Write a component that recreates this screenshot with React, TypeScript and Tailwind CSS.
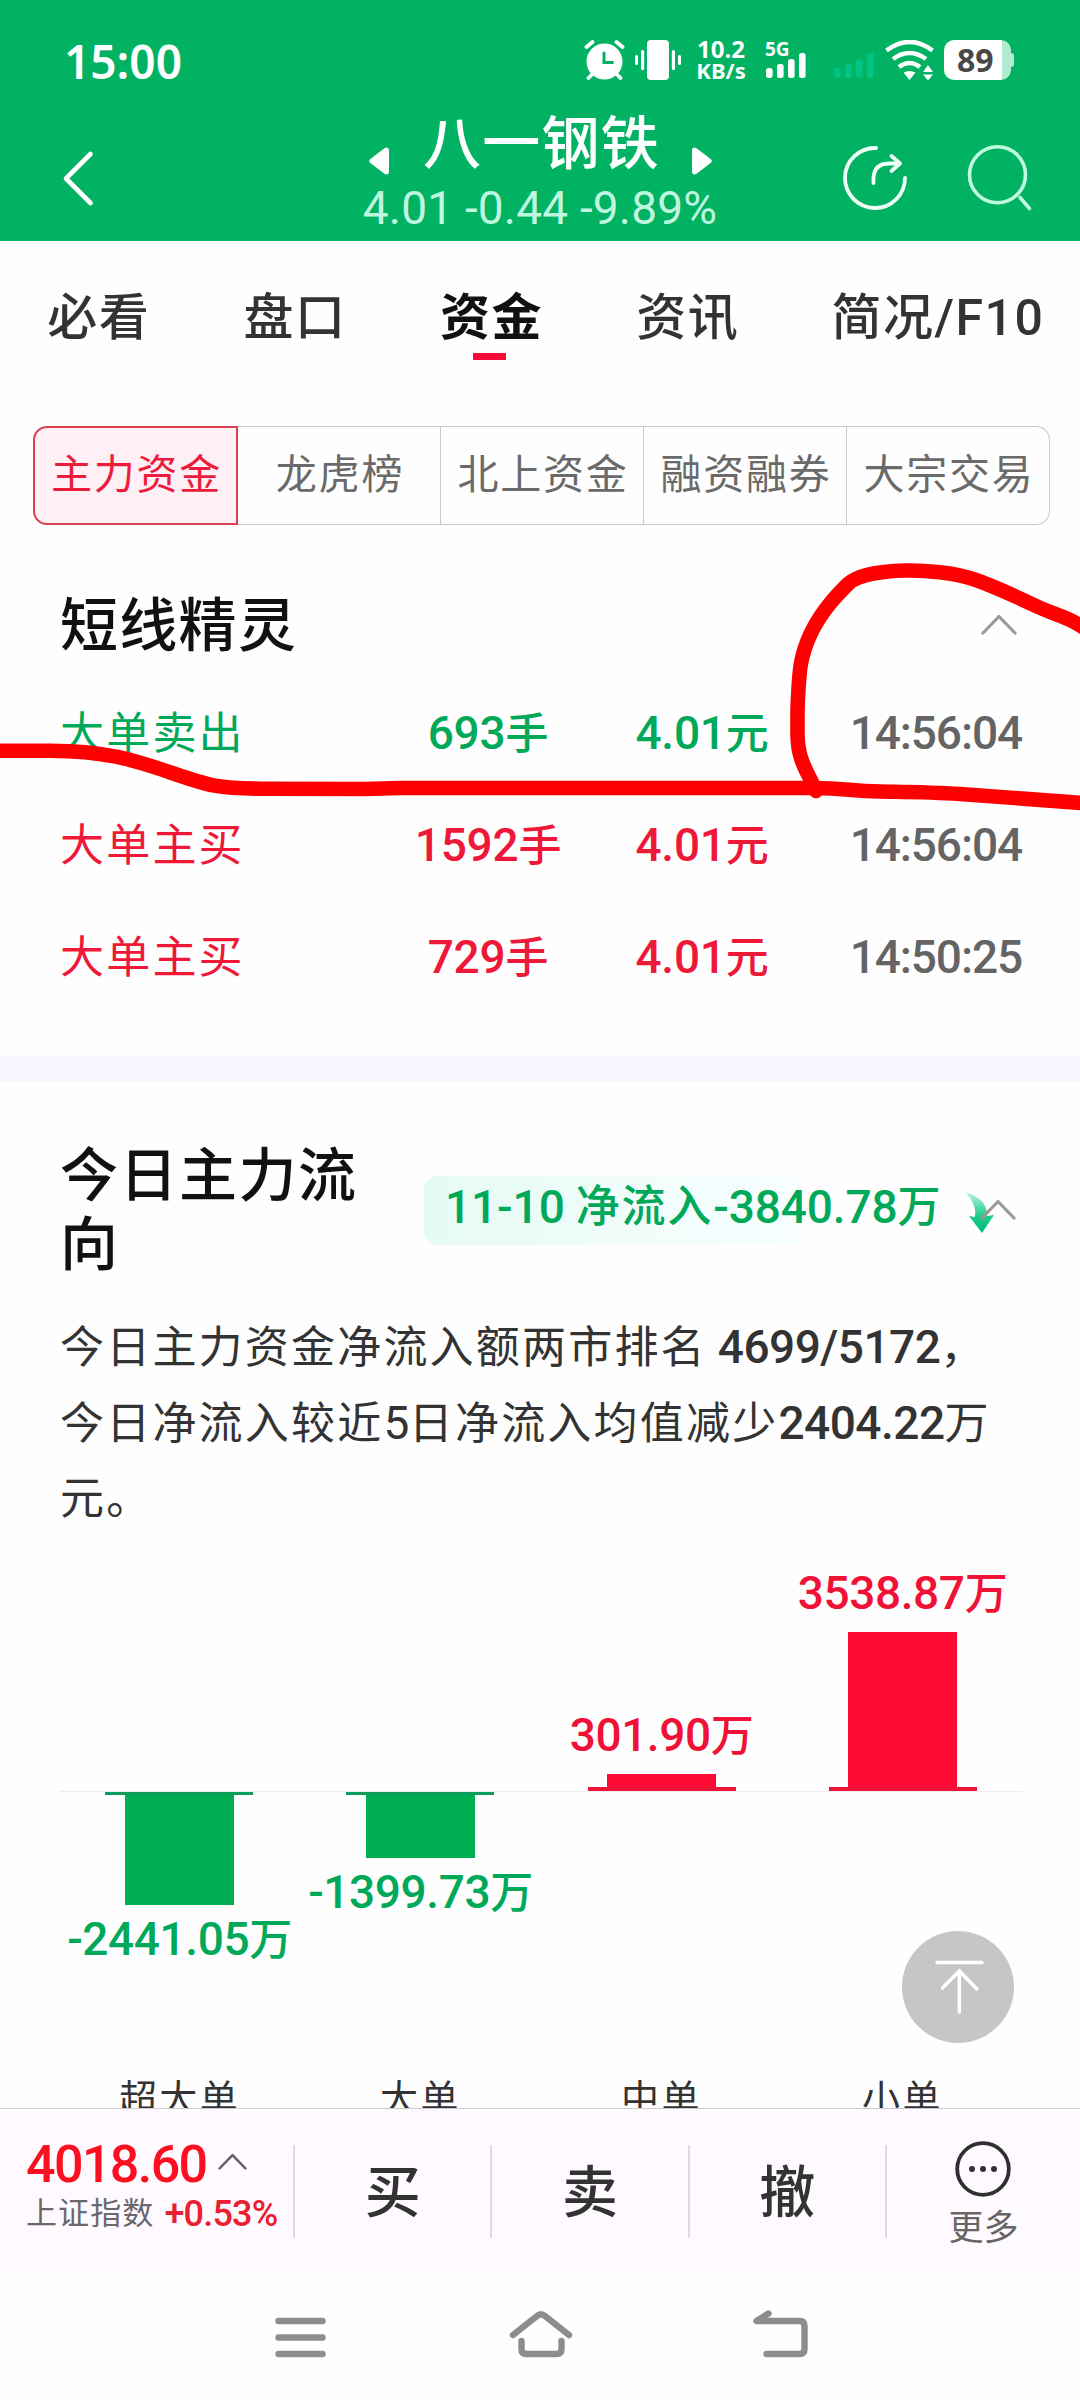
import type { ReactNode } from "react";

const tabs = ["必看", "盘口", "资金", "资讯"];

const segments = ["主力资金", "龙虎榜", "北上资金", "融资融券", "大宗交易"];

const orders = [
  { type: "大单卖出", side: "sell", lots: "693", price: "4.01", time: "14:56:04" },
  { type: "大单主买", side: "buy", lots: "1592", price: "4.01", time: "14:56:04" },
  { type: "大单主买", side: "buy", lots: "729", price: "4.01", time: "14:50:25" },
];

const flows = [
  { name: "超大单", value: "-2441.05", height: 110 },
  { name: "大单", value: "-1399.73", height: 63 },
  { name: "中单", value: "301.90", height: 13 },
  { name: "小单", value: "3538.87", height: 155 },
];

export default function App() {
  return (
    <div className="relative flex h-[2400px] w-[1080px] flex-col overflow-hidden bg-[#fefefe] font-['Roboto','Noto_Sans_CJK_SC',sans-serif] text-[#333]">
      <Header />
      <Tabs />
      <Segments />
      <ShortTerm />
      <div className="h-[26px] shrink-0 bg-[#f6f7ff]" />
      <FlowSection />
      <TradeBar />
      <NavBar />
      <Marker />
    </div>
  );
}

function Header() {
  return (
    <header className="flex h-[241px] shrink-0 flex-col bg-[#00b262] text-white">
      <div className="flex h-20 items-center pt-10 pl-[64px]">
        <span className="w-[520px] pt-0.5 font-['Noto_Sans'] text-[46px] leading-[40px] font-semibold">15:00</span>
        <AlarmIcon />
        <VibrateIcon />
        <div className="ml-[15px] w-[50px] text-center font-['Noto_Sans'] font-bold">
          <p className="text-[24px] leading-[21px]">10.2</p>
          <p className="text-[22px] leading-[23px]">KB/s</p>
        </div>
        <div className="ml-[19px] flex h-10 flex-col">
          <span className="-mt-0.5 h-4 font-['Noto_Sans'] text-[19px] leading-[22px] font-bold">5G</span>
          <Signal className="-mt-px fill-white" />
        </div>
        <Signal className="mt-3 ml-[26px] fill-[#00c486]" />
        <WifiIcon />
        <div className="ml-[9px] flex items-center">
          <div className="flex h-10 w-[67px] items-center rounded-[10px] bg-[linear-gradient(90deg,#fff_58px,#b0ead0_58px)] pl-[13px]">
            <span className="font-['Noto_Sans'] text-[32px] leading-[40px] font-bold text-[#484848]">89</span>
          </div>
          <div className="h-3.5 w-[3px] rounded-r-sm bg-[#b0ead0]" />
        </div>
      </div>

      <div className="grid flex-1 grid-cols-[340px_400px_340px]">
        <div className="pt-[69px] pl-[61px]">
          <svg width="34" height="60" viewBox="0 0 34 60" fill="none" stroke="#fff" strokeWidth="4.600" strokeLinecap="round" strokeLinejoin="round">
            <path d="M29.500 5 5 29.500 29.500 54" />
          </svg>
        </div>
        <div className="flex flex-col items-center pt-[34px]">
          <div className="flex h-[60px] items-center">
            <svg className="mt-[33px]" width="20" height="28" viewBox="0 0 20 28" fill="#fff">
              <path d="M1.400 12 15.800.9Q19.600-.6 20 3v22q-.4 3.600-4.200 2.100L1.400 16q-2.400-2 0-4Z" />
            </svg>
            <h1 className="w-[303px] pl-[3px] text-center text-[58px] leading-[60px] font-medium tracking-[1.200px]">八一钢铁</h1>
            <svg className="mt-[33px]" width="20" height="28" viewBox="0 0 20 28" fill="#fff">
              <path d="M18.600 12 4.200.9Q.4-.6 0 3v22q.4 3.600 4.200 2.100L18.600 16q2.400-2 0-4Z" />
            </svg>
          </div>
          <p className="mt-[16px] text-[46px] leading-[36px] tracking-[0.200px] whitespace-nowrap text-[#bff6df]">4.01 -0.44 -9.89%</p>
        </div>
        <div className="flex gap-[57px] pt-[62px] pl-[101px]">
          <svg width="68" height="70" viewBox="0 0 68 70" fill="none" stroke="#effff7" strokeWidth="3.800" strokeLinecap="round" strokeLinejoin="round">
            <path d="M35 6A30 30 0 1 0 64 36" />
            <path d="M32.500 41v-4q0-15.500 16-15.500h10" />
            <path d="m50.500 14 8.500 7.500-8.500 7.500" />
          </svg>
          <svg width="68" height="70" viewBox="0 0 68 70" fill="none" stroke="#bffbe0" strokeWidth="3.600" strokeLinecap="round">
            <circle cx="31.500" cy="32.700" r="28" />
            <path d="m54 55.500 9.500 11" />
          </svg>
        </div>
      </div>
    </header>
  );
}

function Tabs() {
  return (
    <nav className="flex h-[185px] shrink-0 pt-[47px] text-[50px] leading-[60px] font-medium tracking-[1.500px]">
      {tabs.map((tab) => (
        <div key={tab} className="flex w-[196.400px] flex-col items-center pl-[1px]">
          <span className={tab === "资金" ? "font-bold text-[#111]" : ""}>{tab}</span>
          {tab === "资金" && <span className="mt-[5px] mr-[3px] h-[7px] w-[33px] bg-[#fb0a35]" />}
        </div>
      ))}
      <span className="pl-[46px] whitespace-nowrap">简况/F10</span>
    </nav>
  );
}

function Segments() {
  return (
    <div className="mx-[33px] flex h-[99px] w-[1017px] shrink-0 text-[41px] tracking-[1.800px] text-[#6a6a6a]">
      {segments.map((item, i) => (
        <div
          key={item}
          className={`flex items-center justify-center pl-0.5 ${
            i === 0
              ? "w-[205px] rounded-l-[14px] border-2 border-[#dd4054] bg-[#fff0f5] text-[#ec1c3c]"
              : i === segments.length - 1
                ? "w-[203px] rounded-r-[14px] border-y border-r border-[#c9c9c9]"
                : "w-[203px] border-y border-r border-[#c9c9c9]"
          }`}
        >
          {item}
        </div>
      ))}
    </div>
  );
}

function ShortTerm() {
  return (
    <section className="h-[531px] shrink-0 pt-[71px] pl-[60px]">
      <div className="flex h-[60px] items-center">
        <h2 className="w-[921px] text-[58px] leading-[60px] font-medium tracking-[1.300px] text-[#111]">短线精灵</h2>
        <ChevronUp className="-mt-1 h-[23px] w-9 stroke-[#999]" />
      </div>
      <div className="mt-[21px]">
        {orders.map((order) => (
          <div
            key={order.type + order.time}
            className={`flex h-[112px] items-center text-[46px] font-medium tracking-[-0.200px] ${
              order.side === "sell" ? "text-[#00a859]" : "text-[#ee1838]"
            }`}
          >
            <span className="w-[321px] pt-px text-[44px] font-normal tracking-[2.200px]">{order.type}</span>
            <span className="w-[214px] text-center">
              {order.lots}
              <Unit>手</Unit>
            </span>
            <span className="w-[214px] text-center">
              {order.price}
              <Unit>元</Unit>
            </span>
            <span className="w-[213px] text-right tracking-[-1.100px] text-[#646464]">{order.time}</span>
          </div>
        ))}
      </div>
    </section>
  );
}

function FlowSection() {
  return (
    <section className="relative h-[1026px] shrink-0 overflow-hidden pt-[60px]">
      <div className="flex pl-[60px]">
        <h2 className="w-[364px] pr-[50px] text-[58px] leading-[69px] font-medium tracking-[1.500px] text-[#111]">今日主力流向</h2>
        <div className="mt-[34px] flex h-[69px] w-[540px] rounded-l-[14px] bg-[linear-gradient(90deg,#e4fbf2,#f0fcfa_50%,#f7feff)] bg-[length:374px_100%] bg-no-repeat pl-[21px] text-[46px] leading-[63px] font-medium tracking-[-0.100px] whitespace-nowrap text-[#00a859]">
          11-10 <span className="ml-[11px] text-[44px] tracking-[1.800px]">净流入</span>-3840.78<Unit>万</Unit>
        </div>
        <div className="relative mt-[49px]">
          <svg width="32" height="44" viewBox="0 0 32 44">
            <defs>
              <linearGradient id="drop" x1="0" y1="0" x2="0" y2="1">
                <stop offset="0" stopColor="#b9f5dd" />
                <stop offset="0.600" stopColor="#20ca8b" />
                <stop offset="1" stopColor="#00bc78" />
              </linearGradient>
            </defs>
            <path d="M1 1Q24 8 23 25l7-1-12 18L5 25l6 1Q13 13 1 1Z" fill="url(#drop)" />
          </svg>
          <ChevronUp className="absolute top-[7px] left-[16px] h-[23px] w-9 stroke-[#999]" />
        </div>
      </div>

      <p className="mt-[30px] pl-[60px] text-[44px] leading-[75px] tracking-[2.200px] whitespace-nowrap">
        今日主力资金净流入额两市排名
        <Num>&nbsp;4699/5172</Num>，<br />
        今日净流入较近<span className="text-[46px] tracking-[-0.500px]">5</span>日净流入均值减少<Num>2404.22</Num>万<br />
        元。
      </p>

      <div className="-mt-0.5 ml-[59px] grid w-[964px] grid-cols-4">
        {flows.map((flow) => (
          <FlowColumn key={flow.name} {...flow} />
        ))}
      </div>

      <button className="absolute top-[849px] left-[902px] h-[112px] w-[112px] rounded-full bg-[#c6c6c6]">
        <svg width="112" height="112" viewBox="0 0 112 112" fill="none" stroke="#fff" strokeWidth="3.400" strokeLinecap="round" strokeLinejoin="round">
          <path d="M35 31.500h45M57.300 81V39.500M40.500 57l16.800-17L75 58" />
        </svg>
      </button>
    </section>
  );
}

function FlowColumn({ name, value, height }: { name: string; value: string; height: number }) {
  const out = value.startsWith("-");
  const label = (
    <span className="text-[46px] leading-[46px] font-medium tracking-[-0.400px] whitespace-nowrap">
      {value}
      <Unit>万</Unit>
    </span>
  );
  return (
    <div className="flex flex-col items-center">
      <div className="flex h-[257px] w-full flex-col items-center justify-end border-b border-[#ededed] text-[#f01236]">
        {!out && (
          <>
            {label}
            <div className="mt-[15px] w-[109px] bg-[#ff0b35]" style={{ height }} />
            <div className="h-1 w-[148px] bg-[#ee1439]" />
          </>
        )}
      </div>
      <div className="flex h-[282px] flex-col items-center text-[#00a859]">
        {out && (
          <>
            <div className="h-[3px] w-[148px] bg-[#0c9c5c]" />
            <div className="mb-[11px] w-[109px] bg-[#00ad50]" style={{ height }} />
            {label}
          </>
        )}
      </div>
      <span className="text-[38px] leading-[50px] tracking-[2.400px]">{name}</span>
    </div>
  );
}

function TradeBar() {
  return (
    <div className="flex h-[166px] shrink-0 border-t border-[#cdcbcf] bg-[#fffaff] pt-[36px]">
      <div className="h-[93px] w-[295px] border-r-2 border-[#dddbe0] pl-[26px] whitespace-nowrap">
        <div className="-mt-[3px] flex h-[46px] items-center text-[#fb0f20]">
          <span className="w-[192px] text-[52px] leading-[46px] font-medium tracking-[-1.600px]">4018.60</span>
          <ChevronUp className="-mt-2 h-[19px] w-[29px] stroke-[#666]" />
        </div>
        <div className="mt-2 flex h-9 items-center text-[31px] tracking-[1.100px] text-[#69696c]">
          上证指数
          <span className="ml-[10px] text-[36px] font-medium tracking-[-0.800px] text-[#ea2030]">+0.53%</span>
        </div>
      </div>
      {["买", "卖", "撤"].map((action) => (
        <button
          key={action}
          className="h-[93px] w-[197.300px] border-r-2 border-[#dddbe0] pt-0.5 text-[56px] leading-[93px] font-medium"
        >
          {action}
        </button>
      ))}
      <div className="-mt-1 flex flex-1 flex-col items-center">
        <svg width="56" height="56" viewBox="0 0 56 56" fill="none" stroke="#303030" strokeWidth="3.800">
          <circle cx="28" cy="28" r="25.800" />
          <g fill="#303030" stroke="none">
            <circle cx="17" cy="28" r="3" />
            <circle cx="28" cy="28" r="3" />
            <circle cx="39" cy="28" r="3" />
          </g>
        </svg>
        <span className="mt-[12px] text-[35px] leading-[40px] text-[#666]">更多</span>
      </div>
    </div>
  );
}

function NavBar() {
  return (
    <div className="flex h-[126px] shrink-0 items-center gap-[176.500px] pb-[6px] pl-[270px]">
      <NavIcon>
        <path d="M8.500 17h44M8.500 33.500h44M8.500 50h44" />
      </NavIcon>
      <NavIcon>
        <path d="M4 31 28 12q4-3.500 8 0l24 19M12.500 37v8q0 5 5 5h30q5 0 5-5v-8" />
      </NavIcon>
      <NavIcon>
        <path d="M21.500 9.500 9.500 17h43q5 0 5 5v23q0 5-5 5h-33" />
      </NavIcon>
    </div>
  );
}

function NavIcon({ children }: { children: ReactNode }) {
  return (
    <svg width="62" height="60" viewBox="0 0 62 60" overflow="visible" fill="none" stroke="#8e8c8e" strokeWidth="6.400" strokeLinecap="round" strokeLinejoin="round">
      {children}
    </svg>
  );
}

// hand-drawn red pen strokes over the order list
function Marker() {
  return (
    <svg className="pointer-events-none absolute top-0 left-0" width="1080" height="1000" fill="none" stroke="#ff0000" strokeWidth="14.600" strokeLinecap="round" strokeLinejoin="round">
      <path d="M-10 750.700H50C105 750.700 134 760 172 773S218 788.500 262 788.700L365 789 400 788H815C845 788 850 791 880 791.500S930 792 960 794L1095 804" />
      <path d="M816 791C808 772 798 762 797.500 735V710C799 670 800 656 811 633S838 594 848 584 885 571 905 570.500 955 573 973 579 1015 596 1036 606 1068 616 1090 632" />
    </svg>
  );
}

function Unit({ children }: { children: ReactNode }) {
  return <span className="text-[43px]">{children}</span>;
}

function Num({ children }: { children: ReactNode }) {
  return <span className="text-[46px] font-medium tracking-[-0.500px]">{children}</span>;
}

function ChevronUp({ className }: { className: string }) {
  return (
    <svg className={className} viewBox="0 0 36 23" fill="none" strokeWidth="3.200" strokeLinecap="round" strokeLinejoin="round">
      <path d="M2 20 18 3.500 34 20" />
    </svg>
  );
}

function Signal({ className }: { className: string }) {
  return (
    <svg className={className} width="42" height="26" viewBox="0 0 42 26">
      <rect x="1" y="15" width="6.600" height="10" rx="2.500" />
      <rect x="12" y="11" width="6.600" height="14" rx="2.500" />
      <rect x="23" y="6" width="6.600" height="19" rx="2.500" />
      <rect x="34" y="0" width="6.600" height="25" rx="2.500" />
    </svg>
  );
}

function AlarmIcon() {
  return (
    <svg width="42" height="40" viewBox="0 0 42 40" fill="none" strokeLinecap="round">
      <circle cx="20.500" cy="21.500" r="18" fill="#fff" />
      <path d="m2.500 7 6-5M38.500 7l-6-5M4.500 38l4-4M36.500 38l-4-4" stroke="#fff" strokeWidth="3.800" />
      <path d="M20 13v9.500h8.500" stroke="#00b262" strokeWidth="3" />
    </svg>
  );
}

function VibrateIcon() {
  return (
    <svg className="ml-[9px]" width="46" height="40" viewBox="0 0 46 40" fill="#fff">
      <rect x="12" width="22" height="40" rx="4" />
      <rect x="6" y="10" width="3.200" height="20" rx="1.500" />
      <rect x="36.800" y="10" width="3.200" height="20" rx="1.500" />
      <rect x="0" y="15" width="3" height="10" rx="1.500" />
      <rect x="43" y="15" width="3" height="10" rx="1.500" />
    </svg>
  );
}

function WifiIcon() {
  return (
    <svg className="ml-[10px]" width="50" height="40" viewBox="0 0 50 40" fill="none" stroke="#fff" strokeWidth="4.600">
      <path d="M1.500 10.500q23-17 46 0M8 19q16.500-12 33 0M14 27q10.500-8 21 0" />
      <path d="M18.500 32.500q6-3 12 0L24.500 40ZM38 32l5-7 5 7ZM38 34.500l5 6 5-6Z" fill="#fff" stroke="none" />
    </svg>
  );
}
